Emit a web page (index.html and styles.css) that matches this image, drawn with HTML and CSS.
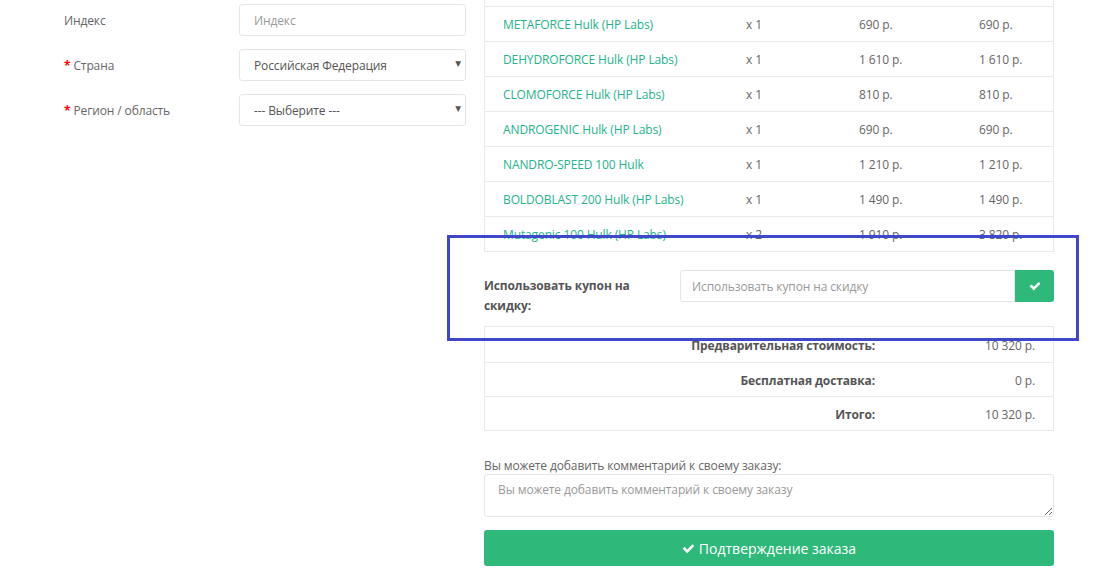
FILE: index.html
```html
<!DOCTYPE html>
<html lang="ru">
<head>
    <meta charset="UTF-8">
    <title>Оформление заказа</title>
    <link rel="stylesheet" href="styles.css">
</head>
<body>
    <div class="page">
        <div class="address">
            <div class="form-row">
                <label class="form-label">Индекс</label>
                <input class="form-input" type="text" placeholder="Индекс">
            </div>
            <div class="form-row">
                <label class="form-label"><span class="req">*</span> Страна</label>
                <div class="select-wrap">
                    <select class="form-input">
                        <option>Российская Федерация</option>
                    </select>
                </div>
            </div>
            <div class="form-row">
                <label class="form-label"><span class="req">*</span> Регион / область</label>
                <div class="select-wrap">
                    <select class="form-input">
                        <option>--- Выберите ---</option>
                    </select>
                </div>
            </div>
        </div>

        <div class="cart">
            <div class="products">
                <div class="prod-row"></div>
                <div class="prod-row">
                    <a class="prod-name" href="#">METAFORCE Hulk (HP Labs)</a>
                    <span>x 1</span><span>690 р.</span><span>690 р.</span>
                </div>
                <div class="prod-row">
                    <a class="prod-name" href="#">DEHYDROFORCE Hulk (HP Labs)</a>
                    <span>x 1</span><span>1 610 р.</span><span>1 610 р.</span>
                </div>
                <div class="prod-row">
                    <a class="prod-name" href="#">CLOMOFORCE Hulk (HP Labs)</a>
                    <span>x 1</span><span>810 р.</span><span>810 р.</span>
                </div>
                <div class="prod-row">
                    <a class="prod-name" href="#">ANDROGENIC Hulk (HP Labs)</a>
                    <span>x 1</span><span>690 р.</span><span>690 р.</span>
                </div>
                <div class="prod-row">
                    <a class="prod-name" href="#">NANDRO-SPEED 100 Hulk</a>
                    <span>x 1</span><span>1 210 р.</span><span>1 210 р.</span>
                </div>
                <div class="prod-row">
                    <a class="prod-name" href="#">BOLDOBLAST 200 Hulk (HP Labs)</a>
                    <span>x 1</span><span>1 490 р.</span><span>1 490 р.</span>
                </div>
                <div class="prod-row">
                    <a class="prod-name" href="#">Mutagenic 100 Hulk (HP Labs)</a>
                    <span>x 2</span><span>1 910 р.</span><span>3 820 р.</span>
                </div>
            </div>

            <div class="coupon">
                <label class="coupon-label">Использовать купон на скидку:</label>
                <div class="coupon-group">
                    <input class="form-input" type="text" placeholder="Использовать купон на скидку">
                    <button class="coupon-btn" type="button">
                        <svg class="check" viewBox="0 0 1792 1792" width="12" height="12"><path fill="#fff" d="M1671 566q0 40-28 68l-724 724-136 136q-28 28-68 28t-68-28l-136-136-362-362q-28-28-28-68t28-68l136-136q28-28 68-28t68 28l294 295 656-657q28-28 68-28t68 28l136 136q28 28 28 68z"/></svg>
                    </button>
                </div>
            </div>

            <div class="totals">
                <div class="total-row">
                    <span class="total-label">Предварительная стоимость:</span>
                    <span class="total-value">10 320 р.</span>
                </div>
                <div class="total-row">
                    <span class="total-label">Бесплатная доставка:</span>
                    <span class="total-value">0 р.</span>
                </div>
                <div class="total-row">
                    <span class="total-label">Итого:</span>
                    <span class="total-value">10 320 р.</span>
                </div>
            </div>

            <label class="comment-label">Вы можете добавить комментарий к своему заказу:</label>
            <textarea class="comment" placeholder="Вы можете добавить комментарий к своему заказу"></textarea>

            <button class="confirm-btn" type="button">
                <svg class="check" viewBox="0 0 1792 1792" width="13" height="13"><path fill="#fff" d="M1671 566q0 40-28 68l-724 724-136 136q-28 28-68 28t-68-28l-136-136-362-362q-28-28-28-68t28-68l136-136q28-28 68-28t68 28l294 295 656-657q28-28 68-28t68 28l136 136q28 28 28 68z"/></svg>
                Подтверждение заказа
            </button>
        </div>
    </div>

    <!-- annotation frame drawn over the coupon block -->
    <div class="highlight"></div>
</body>
</html>
```

FILE: styles.css
```css
body {
    margin: 0;
    background: #fff;
    font-family: "Open Sans", Arial, sans-serif;
    font-size: 12px;
    letter-spacing: -0.12px;
    color: #666;
    position: relative;
    overflow: hidden;
    height: 586px;
}
.page {
    display: flex;
    align-items: flex-start;
    padding: 4px 0 0 64px;
}

/* Address form */
.address {
    width: 402px;
}
.form-row {
    display: flex;
    align-items: center;
    margin-bottom: 13px;
}
.form-label {
    width: 175px;
    color: #666;
}
.req {
    color: #f00;
    font-weight: bold;
}
.form-input {
    box-sizing: border-box;
    height: 32px;
    width: 227px;
    border: 1px solid #e6e6e6;
    border-radius: 3px;
    padding: 0 14px;
    font-family: inherit;
    font-size: 12px;
    letter-spacing: -0.12px;
    color: #555;
    background: #fff;
    outline: none;
}
.form-input::placeholder {
    color: #999;
}
select.form-input {
    appearance: none;
    -webkit-appearance: none;
}
.select-wrap {
    position: relative;
}
.select-wrap::after {
    content: "▼";
    position: absolute;
    right: 5px;
    top: 10px;
    font-family: "DejaVu Sans", sans-serif;
    font-size: 7.5px;
    color: #555;
    pointer-events: none;
}

/* Cart */
.cart {
    width: 570px;
    margin-left: 18px;
    display: flex;
    flex-direction: column;
}
.products {
    margin-top: -33px;
    border: 1px solid #e9e9e9;
    border-top: none;
}
.prod-row {
    display: grid;
    grid-template-columns: 261px 113px 120px 1fr;
    align-items: center;
    height: 34px;
    border-top: 1px solid #e9e9e9;
}
.prod-row:first-child {
    border-top: none;
    height: 35px;
}
.prod-name {
    padding-left: 18px;
    color: #25b38c;
    text-decoration: none;
}

.coupon {
    display: flex;
    align-items: flex-start;
    margin: 18px 0 10px;
}
.coupon-label {
    box-sizing: border-box;
    width: 196px;
    padding: 6px 40px 0 0;
    line-height: 20px;
    font-weight: bold;
    color: #555;
}
.coupon-group {
    display: flex;
    flex: 1;
}
.coupon-group .form-input {
    flex: 1;
    width: auto;
    border-radius: 3px 0 0 3px;
    padding-left: 11px;
}
.coupon-btn {
    width: 39px;
    height: 32px;
    border: none;
    border-radius: 0 3px 3px 0;
    background: #2eb87a;
    display: flex;
    align-items: center;
    justify-content: center;
    padding: 0;
}

.totals {
    border: 1px solid #e9e9e9;
}
.total-row {
    display: grid;
    grid-template-columns: 390px 1fr;
    align-items: center;
    height: 34px;
    padding-top: 1px;
    box-sizing: border-box;
    border-top: 1px solid #e9e9e9;
}
.total-row:first-child {
    border-top: none;
    height: 35px;
    padding-top: 2px;
}
.total-label {
    text-align: right;
    font-weight: bold;
    color: #555;
}
.total-value {
    text-align: right;
    padding-right: 18px;
}

.comment-label {
    margin-top: 26px;
    line-height: 17px;
    color: #666;
}
.comment {
    box-sizing: border-box;
    height: 43px;
    border: 1px solid #e6e6e6;
    border-radius: 3px;
    padding: 6px 13px;
    font-family: inherit;
    font-size: 12px;
    letter-spacing: -0.12px;
    outline: none;
}
.comment::placeholder {
    color: #999;
}
.confirm-btn {
    margin-top: 13px;
    height: 36px;
    border: none;
    border-radius: 3px;
    background: #2eb87a;
    color: #fff;
    font-family: inherit;
    font-size: 14px;
    display: flex;
    align-items: center;
    justify-content: center;
    gap: 4px;
}

.highlight {
    position: absolute;
    left: 447px;
    top: 235px;
    width: 626px;
    height: 100px;
    border: 3px solid #3f48cc;
    pointer-events: none;
}
```
